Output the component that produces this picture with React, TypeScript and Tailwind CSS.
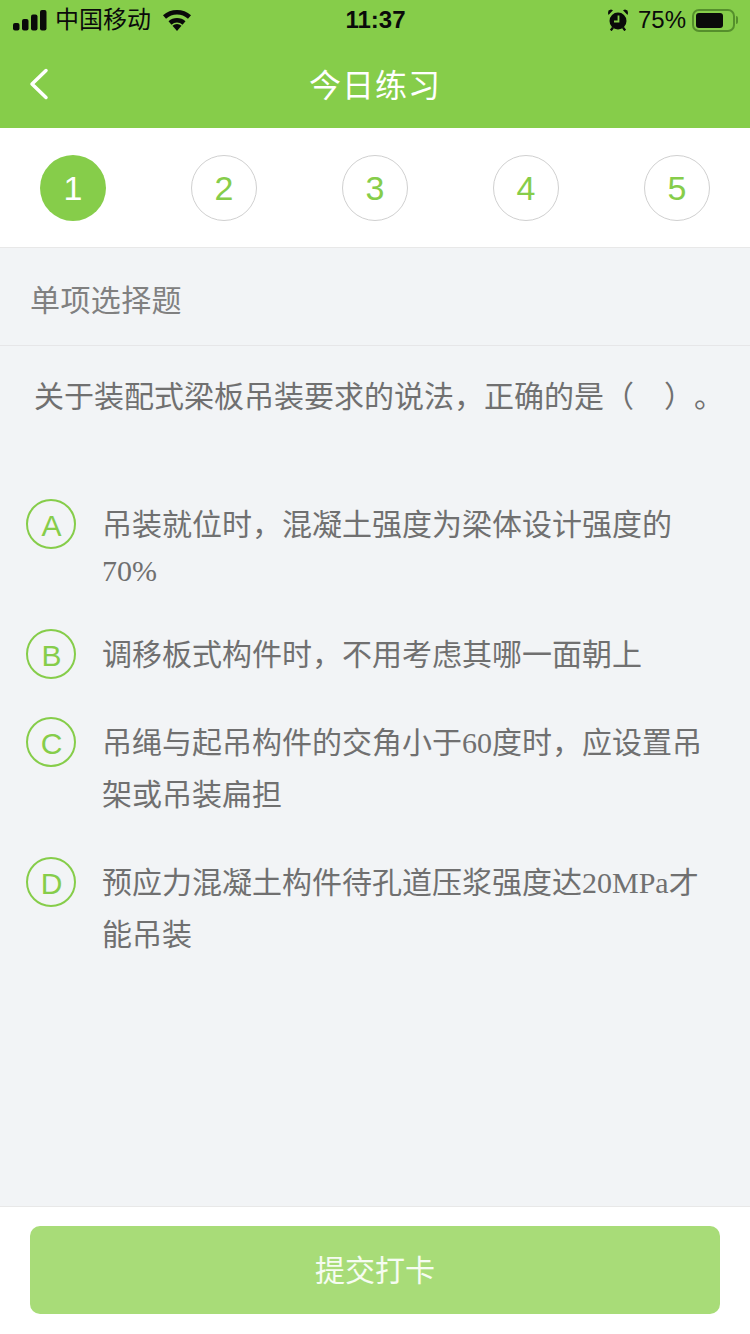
import React from "react";

const sans = "font-['Liberation_Sans','Noto_Sans_CJK_SC',sans-serif]";

const steps = ["1", "2", "3", "4", "5"];

const options = [
  { key: "A", lines: ["吊装就位时，混凝土强度为梁体设计强度的", "70%"], h: "h-[130px]" },
  { key: "B", lines: ["调移板式构件时，不用考虑其哪一面朝上"], h: "h-[88px]" },
  { key: "C", lines: ["吊绳与起吊构件的交角小于60度时，应设置吊", "架或吊装扁担"], h: "h-[140px]" },
  { key: "D", lines: ["预应力混凝土构件待孔道压浆强度达20MPa才", "能吊装"], h: "h-[140px]" },
];

// latin in the option text is a serif face in the screenshot
const Line = ({ text }: { text: string }) => {
  const parts = text.split(/([0-9A-Za-z%]+)/);
  const latinOnly = /^[0-9A-Za-z%]+$/.test(text);
  return (
    <div className={latinOnly ? "h-[40px] leading-[40px] whitespace-nowrap" : "h-[52px] leading-[52px] whitespace-nowrap"}>
      {parts.map((p, i) =>
        /[0-9A-Za-z%]/.test(p) ? (
          <span key={i} className="font-['Liberation_Serif',serif]">
            {p}
          </span>
        ) : (
          <span key={i}>{p}</span>
        )
      )}
    </div>
  );
};

const StatusBar = () => (
  <div className="flex h-[40px] items-center justify-between pl-[13px] pr-[12px] text-[#0a0a0a]">
    <div className="flex w-[200px] items-center">
      <svg width="34" height="21" viewBox="0 0 34 21" fill="currentColor">
        <rect x="0" y="13" width="6.500" height="7.500" rx="2" />
        <rect x="9" y="9" width="6.500" height="11.500" rx="2" />
        <rect x="18" y="4.500" width="6.500" height="16" rx="2" />
        <rect x="27" y="0" width="6.500" height="20.500" rx="2" />
      </svg>
      <span className="ml-[8px] text-[24px] leading-none">中国移动</span>
      <svg className="ml-[11px]" width="30" height="22" viewBox="0 0 30 22" fill="none">
        <path d="M2.500 8A18.500 18.500 0 0 1 27.500 8" stroke="currentColor" strokeWidth="4.500" />
        <path d="M8 14A10.500 10.500 0 0 1 22 14" stroke="currentColor" strokeWidth="4.500" />
        <path d="M15 22 10.500 16.800A6.500 6.500 0 0 1 19.500 16.800Z" fill="currentColor" />
      </svg>
    </div>
    <span className="text-[24px] font-bold leading-none">11:37</span>
    <div className="flex w-[200px] items-center justify-end">
      <svg width="20" height="22" viewBox="0 0 20 22">
        <path d="M0.500 6 5 1.200 3 0.500 0.500 1.500 0 4zM19.500 6 15 1.200 17 0.500 19.500 1.500 20 4z" fill="currentColor" />
        <circle cx="10" cy="12" r="8.500" fill="currentColor" />
        <path d="M10.500 6.500v6H6" fill="none" stroke="#86cd4a" strokeWidth="1.800" />
        <path d="M5 18.500l-2.200 3M15 18.500l2.200 3" stroke="currentColor" strokeWidth="2.200" />
      </svg>
      <span className="ml-[10px] text-[24px] leading-none">75%</span>
      <div className="ml-[6px] flex h-[23px] w-[43px] items-center rounded-[7px] border-2 border-[#558f2c] p-[2px]">
        <div className="h-full w-[27px] rounded-[3px] bg-[#0a0a0a]" />
      </div>
      <div className="ml-[1px] h-[8px] w-[2px] rounded-r-full bg-[#558f2c]" />
    </div>
  </div>
);

export default function App() {
  return (
    <div className={`flex h-[1334px] w-[750px] flex-col overflow-hidden bg-[#f2f4f6] ${sans}`}>
      <header className="h-[128px] bg-[#86cd4a]">
        <StatusBar />
        <div className="relative flex h-[88px] items-center justify-center pt-[3px]">
          <svg className="absolute left-[29px] top-[28px]" width="20" height="32" viewBox="0 0 20 32" fill="none">
            <path d="M17 2.500 3 16l14 13.500" stroke="#fff" strokeWidth="3.500" strokeLinecap="round" strokeLinejoin="round" />
          </svg>
          <h1 className="text-[32px] font-normal leading-none tracking-[1px] text-white">今日练习</h1>
        </div>
      </header>

      <div className="flex h-[120px] items-center justify-between border-b border-[#e8e8e8] bg-white px-[40px] pt-[1px]">
        {steps.map((s, i) => (
          <div
            key={s}
            className={
              i === 0
                ? "flex h-[66px] w-[66px] items-center justify-center rounded-full bg-[#86cd4a] text-[34px] font-light text-white"
                : "flex h-[66px] w-[66px] items-center justify-center rounded-full border border-[#d0d0d0] text-[34px] text-[#86cd4a]"
            }
          >
            {s}
          </div>
        ))}
      </div>

      <div className="flex h-[98px] items-center border-b border-[#e6e6e8] pt-[8px] pl-[30px] text-[30px] tracking-[0.4px] text-[#808080]">
        单项选择题
      </div>

      <p className="mt-[31px] h-[122px] whitespace-nowrap pl-[34px] text-[30px] leading-[40px] text-[#707070]">
        关于装配式梁板吊装要求的说法，正确的是（<span className="ml-[30px]">）</span>
        <span className="ml-[15px]">。</span>
      </p>

      <div className="flex-1 pl-[26px] text-[30px] text-[#707070]">
        {options.map((o) => (
          <div key={o.key} className={`flex ${o.h}`}>
            <div className="flex h-[50px] w-[50px] shrink-0 items-center justify-center rounded-full border-2 border-[#86cd4a] pt-[3px] pl-[1px] text-[30px] text-[#86cd4a]">
              {o.key}
            </div>
            <div className="ml-[26px]">
              {o.lines.map((l) => (
                <Line key={l} text={l} />
              ))}
            </div>
          </div>
        ))}
      </div>

      <div className="h-[128px] border-t border-[#e8e8e8] bg-white px-[30px] pt-[19px]">
        <button
          type="button"
          className="flex h-[88px] w-full items-center justify-center rounded-[10px] bg-[#a8dc78] text-[30px] text-white/90"
        >
          提交打卡
        </button>
      </div>
    </div>
  );
}
